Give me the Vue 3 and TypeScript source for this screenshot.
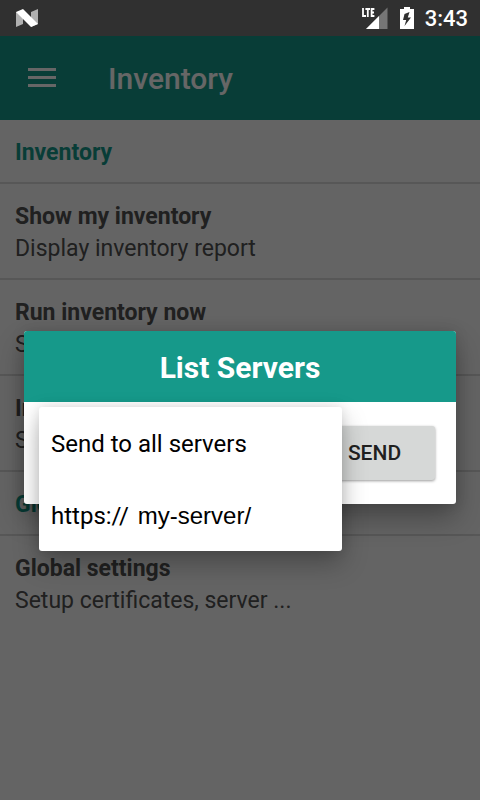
<script setup lang="ts">
import { ref } from 'vue'

interface Entry {
  title: string
  summary: string
}
interface Section {
  name: string
  entries: Entry[]
}

const sections: Section[] = [
  {
    name: 'Inventory',
    entries: [
      { title: 'Show my inventory', summary: 'Display inventory report' },
      { title: 'Run inventory now', summary: 'Send inventory' },
      { title: 'Inventory parameters', summary: 'Setup parameters' },
    ],
  },
  {
    name: 'Global',
    entries: [{ title: 'Global settings', summary: 'Setup certificates, server ...' }],
  },
]

const selected = ref('all')
</script>

<template>
  <div class="screen">
    <header class="status">
      <svg class="n-logo" viewBox="0 0 22 18" aria-hidden="true">
        <path d="M0 3 L7 3 V15 L0 18Z M15 3 L22 0 V15 L15 18Z" fill="#b0b0b0" />
        <path d="M0 3 L7 0 L22 15 L15 18Z" fill="#fff" />
      </svg>
      <div class="indicators">
        <svg class="signal" viewBox="0 0 27 22" aria-hidden="true">
          <path d="M26.5 0.5 V22 H5Z" fill="#757575" />
          <path d="M18 9 V22 H5Z" fill="#fff" />
          <path d="M2 1 V9 H5 M4.4 2 H9 M6.8 2 V10 M13.4 2 H10.6 V9 H13.4 M10.6 5.5 H13" fill="none" stroke="#fff" stroke-width="1.8" />
        </svg>
        <svg class="battery" viewBox="0 0 14 22" aria-hidden="true">
          <path d="M4 0 H10 V2 H14 V22 H0 V2 H4Z" fill="#fff" />
          <path d="M9.5 5 L4.5 7 L3 13 H6.2 L4.5 19 L11 10.5 H7.8Z" fill="#303030" />
        </svg>
        <span class="clock">3:43</span>
      </div>
    </header>

    <div class="page">
      <header class="app-bar">
        <button class="menu-button" type="button" aria-label="Open menu">
          <svg viewBox="0 0 28 20" aria-hidden="true">
            <path d="M0 1.5 H28 M0 9.5 H28 M0 17.5 H28" stroke="#fff" stroke-width="3" />
          </svg>
        </button>
        <h1>Inventory</h1>
      </header>
      <main>
        <section v-for="section in sections" :key="section.name">
          <h2>{{ section.name }}</h2>
          <div v-for="entry in section.entries" :key="entry.title" class="entry">
            <h3>{{ entry.title }}</h3>
            <p>{{ entry.summary }}</p>
          </div>
        </section>
      </main>
    </div>

    <div class="scrim">
      <div class="dialog" role="dialog" aria-labelledby="dialog-title">
        <h2 id="dialog-title" class="dialog-title">List Servers</h2>
        <div class="dialog-body">
          <button class="send" type="button">SEND</button>
        </div>
        <div class="dropdown" role="listbox" aria-label="Server">
          <button type="button" role="option" :aria-selected="selected === 'all'" @click="selected = 'all'">
            Send to all servers
          </button>
          <button type="button" role="option" :aria-selected="selected === 'own'" @click="selected = 'own'">
            <span>https://</span><span class="host">my-server/</span>
          </button>
        </div>
      </div>
    </div>
  </div>
</template>

<style>
body {
  margin: 0;
}
</style>

<style scoped>
.screen {
  position: relative;
  display: flex;
  flex-direction: column;
  min-height: 100vh;
  font-family: Roboto, "Liberation Sans", sans-serif;
  background: #fafafa;
}
h1,
h2,
h3,
p {
  margin: 0;
}
button {
  border: 0;
  font-family: inherit;
}
.status {
  display: flex;
  align-items: center;
  justify-content: space-between;
  height: 36px;
  padding: 0 12px 0 16px;
  background: #303030;
  color: #fff;
}
.n-logo {
  width: 22px;
  height: 18px;
}
.indicators {
  display: flex;
  align-items: center;
}
.signal {
  width: 27px;
  height: 22px;
  margin-right: 12px;
}
.battery {
  width: 14px;
  height: 22px;
  margin-right: 11px;
}
.clock {
  padding-top: 2px;
  font-size: 22px;
  font-weight: 500;
  line-height: 34px;
}
.page {
  flex: 1;
}
.app-bar {
  display: flex;
  align-items: center;
  gap: 52px;
  height: 84px;
  padding: 0 28px;
  background: #16998a;
  color: #fff;
}
.menu-button {
  padding: 0;
  background: none;
}
.menu-button svg {
  display: block;
  width: 28px;
  height: 20px;
}
h1 {
  padding-top: 2px;
  font-size: 30px;
  font-weight: 500;
  line-height: 40px;
}
section h2 {
  padding: 18px 15px 14px;
  border-bottom: 2px solid #dadada;
  color: #16998a;
  font-size: 23px;
  line-height: 30px;
}
.entry {
  padding: 17px 15px 13px;
  border-bottom: 2px solid #dadada;
  color: #505050;
  font-size: 23px;
  line-height: 32px;
}
section:last-child .entry:last-child {
  border-bottom: 0;
}
h3 {
  font-size: 23px;
}
.scrim {
  position: absolute;
  inset: 36px 0 0;
  display: flex;
  align-items: center;
  padding: 0 24px 2px;
  background: rgba(0, 0, 0, 0.6);
}
.dialog {
  position: relative;
  flex: 1;
  border-radius: 3px;
  background: #fff;
  box-shadow: 0 14px 28px rgba(0, 0, 0, 0.3), 0 0 14px rgba(0, 0, 0, 0.12);
}
.dialog-title {
  padding: 17px 16px 14px;
  border-radius: 3px 3px 0 0;
  background: #16998a;
  color: #fff;
  font-size: 30px;
  line-height: 40px;
  text-align: center;
}
.dialog-body {
  display: flex;
  justify-content: flex-end;
  padding: 24px 21px;
}
.send {
  width: 121px;
  height: 54px;
  border-radius: 3px;
  background: #d6d8d7;
  box-shadow: 0 1px 3px rgba(0, 0, 0, 0.4);
  color: #202020;
  font-size: 21px;
  font-weight: 500;
}
.dropdown {
  position: absolute;
  top: 76px;
  left: 15px;
  width: 303px;
  border-radius: 3px;
  background: #fff;
  box-shadow: 0 12px 26px rgba(0, 0, 0, 0.28), 0 0 12px rgba(0, 0, 0, 0.1);
}
.dropdown button {
  display: flex;
  align-items: center;
  gap: 9px;
  width: 100%;
  height: 72px;
  padding: 2px 12px 0;
  background: none;
  color: #000;
  font-size: 24px;
}
.host {
  font-family: "Liberation Sans", Arial, sans-serif;
}
</style>
